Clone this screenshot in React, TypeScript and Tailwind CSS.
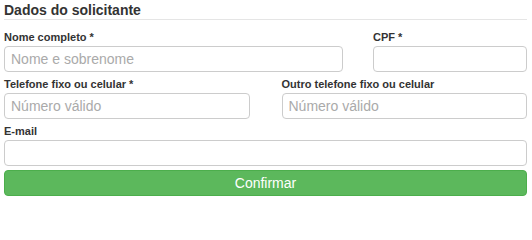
export default function App() {
  return (
    <div className="w-[532px] h-[204px] bg-white pl-[4px] pr-[5px] font-['Liberation_Sans',Arial,sans-serif] text-[#333]">
      <h2 className="text-[14px] font-bold leading-[18px] pt-[1px] text-[#333]">Dados do solicitante</h2>
      <div className="border-t border-[#e5e5e5]" />

      <div className="grid grid-cols-[339px_1fr] gap-x-[30px] mt-[10px]">
        <div>
          <label className="block text-[11px] font-bold leading-[14px] mb-[2px]">Nome completo *</label>
          <input
            className="block w-full h-[26px] border border-[#ccc] rounded-[4px] px-[6px] text-[14px] outline-none placeholder:text-[#aaa]"
            placeholder="Nome e sobrenome"
          />
        </div>
        <div>
          <label className="block text-[11px] font-bold leading-[14px] mb-[2px]">CPF *</label>
          <input className="block w-full h-[26px] border border-[#ccc] rounded-[4px] px-[6px] text-[14px] outline-none" />
        </div>
      </div>

      <div className="grid grid-cols-2 gap-x-[32px] mt-[5px]">
        <div>
          <label className="block text-[11px] font-bold leading-[14px] mb-[2px]">Telefone fixo ou celular *</label>
          <input
            className="block w-full h-[26px] border border-[#ccc] rounded-[4px] px-[6px] text-[14px] outline-none placeholder:text-[#aaa]"
            placeholder="Número válido"
          />
        </div>
        <div>
          <label className="block text-[11px] font-bold leading-[14px] mb-[2px]">Outro telefone fixo ou celular</label>
          <input
            className="block w-full h-[26px] border border-[#ccc] rounded-[4px] px-[6px] text-[14px] outline-none placeholder:text-[#aaa]"
            placeholder="Número válido"
          />
        </div>
      </div>

      <div className="mt-[5px]">
        <label className="block text-[11px] font-bold leading-[14px] mb-[2px]">E-mail</label>
        <input className="block w-full h-[26px] border border-[#ccc] rounded-[4px] px-[6px] text-[14px] outline-none" />
      </div>

      <button className="block w-full h-[26px] mt-[4px] rounded-[4px] bg-[#5cb85c] border border-[#4cae4c] text-white text-[14px] leading-[24px]">
        Confirmar
      </button>
    </div>
  );
}
